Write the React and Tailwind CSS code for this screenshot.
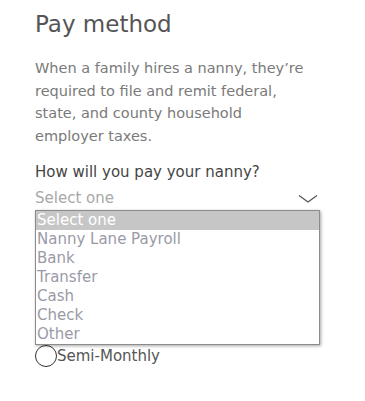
import React from "react";

const options = ["Select one", "Nanny Lane Payroll", "Bank", "Transfer", "Cash", "Check", "Other"];

export default function App() {
  return (
    <div
      className="relative w-[365px] h-[401px] bg-white pl-[35px] pr-[40px] pt-[10px]"
      style={{ fontFamily: '"DejaVu Sans", sans-serif' }}
    >
      <h1 className="text-[23px] leading-[28px] text-[#555555] font-normal">Pay method</h1>
      <p className="mt-[19px] text-[14.5px] leading-[22.7px] text-[#7a7a7a] w-[280px]">
        When a family hires a nanny, they’re required to file and remit federal, state, and county household employer taxes.
      </p>
      <div className="mt-[14px] text-[15px] leading-[20px] text-[#454545]">How will you pay your nanny?</div>
      <div className="relative mt-[5px] w-[285px] h-[22px] flex items-center justify-between">
        <span className="text-[15px] text-[#a8a8a8]">Select one</span>
        <svg width="20" height="10" viewBox="0 0 20 10" className="mr-[2px] mt-[2px]">
          <path d="M1 1.5 L10 8 L19 1.5" fill="none" stroke="#555" strokeWidth="1.3" />
        </svg>
        <div className="absolute left-0 top-[23px] w-[285px] bg-white border border-[#8c8c8c] shadow-[1px_1px_3px_rgba(0,0,0,0.35)] z-10">
          {options.map((o, i) => (
            <div
              key={o}
              className={
                "h-[19px] leading-[19px] text-[15px] pl-[1px] " +
                (i === 0 ? "bg-[#c6c6c6] text-white" : "text-[#9a9aa6]")
              }
            >
              {o}
            </div>
          ))}
        </div>
      </div>
      <label className="mt-[136px] flex items-center h-[22px] text-[15px] text-[#555555]">
        <span className="w-[22px] h-[22px] rounded-full border-[1.5px] border-[#333] bg-white shrink-0" />
        <span>Semi-Monthly</span>
      </label>
    </div>
  );
}
